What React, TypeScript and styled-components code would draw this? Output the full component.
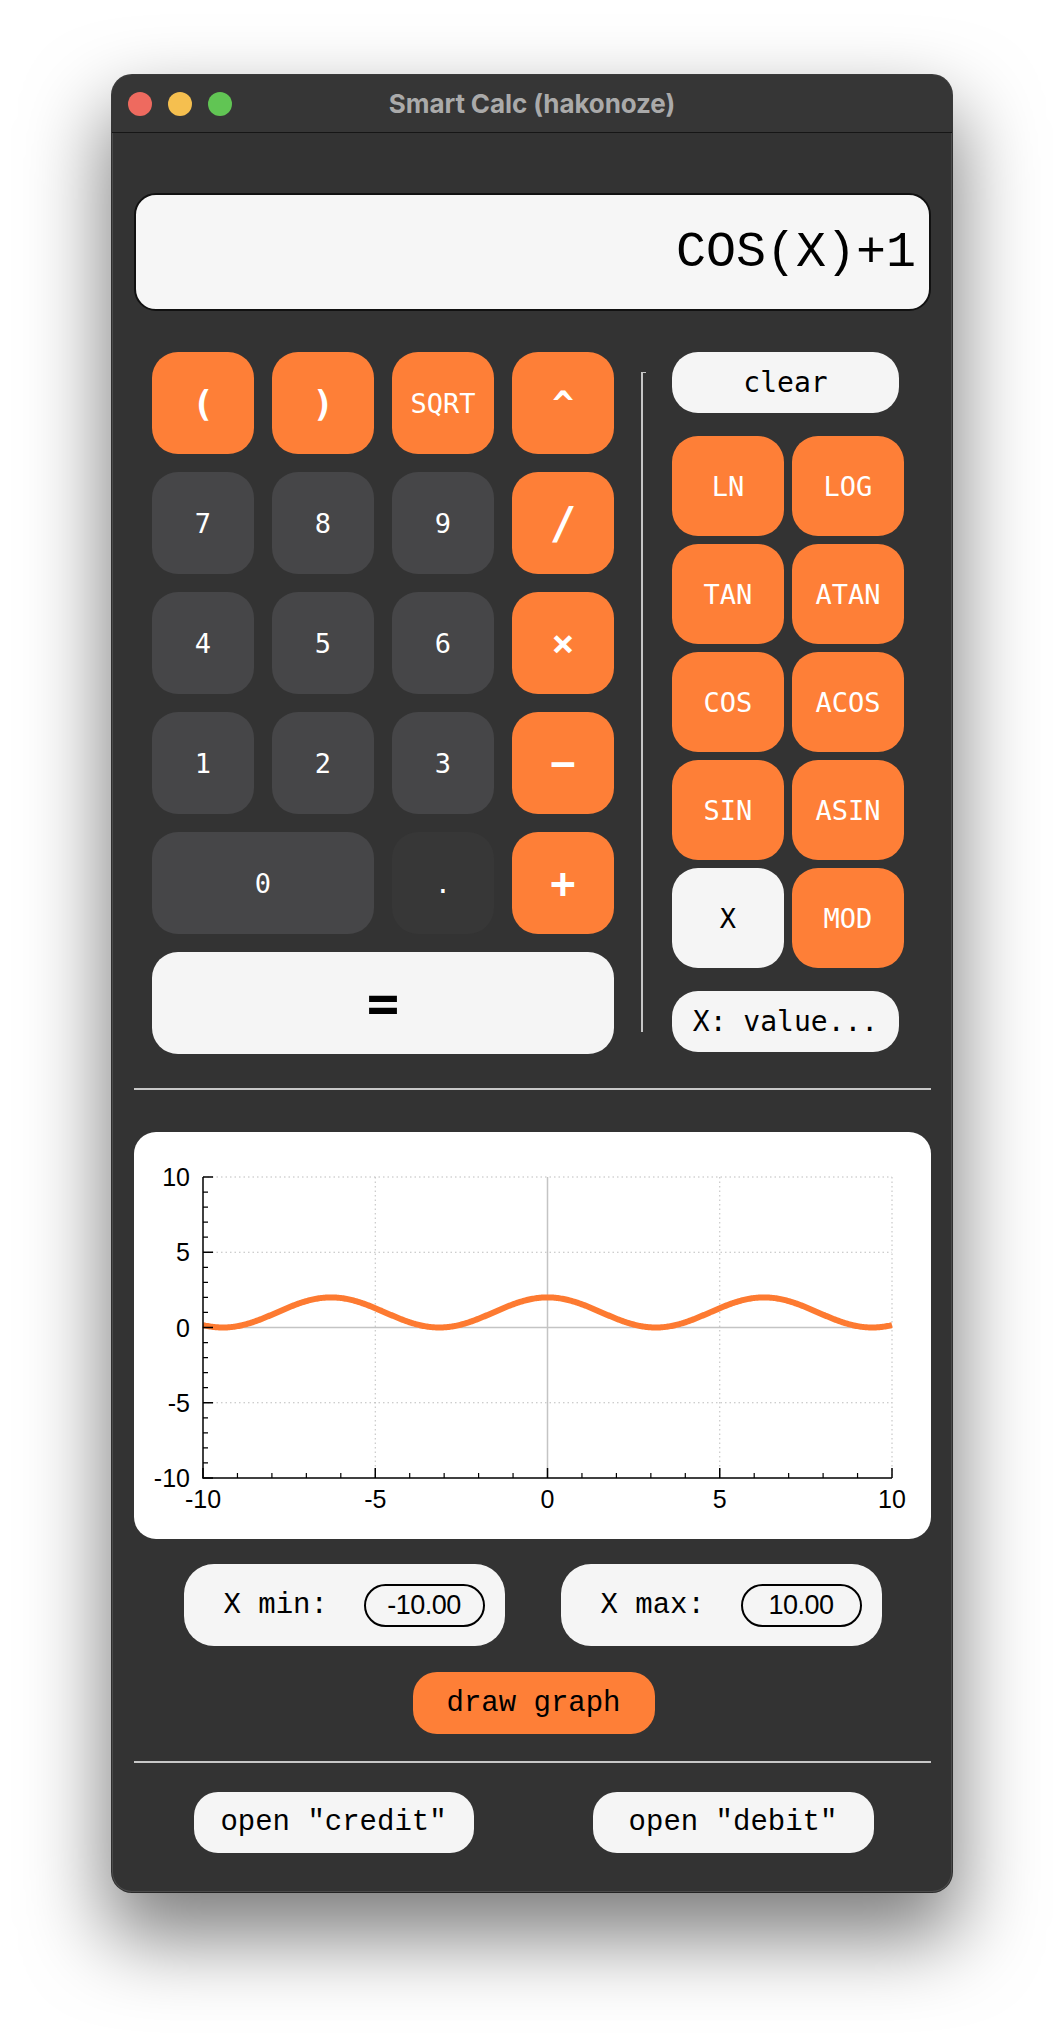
import React from "react";
import styled, { createGlobalStyle, css } from "styled-components";

const GlobalStyle = createGlobalStyle`
  html, body { margin: 0; padding: 0; background: #ffffff; }
  * { box-sizing: border-box; }
`;

const ORANGE = "#fe7f37";
const LIGHT = "#f5f5f5";
const MONO = `"DejaVu Sans Mono", "Liberation Mono", monospace`;
const NARROW_MONO = `"Liberation Mono", "DejaVu Sans Mono", monospace`;

const Page = styled.div`
  width: 1064px;
  height: 2040px;
  padding: 75px 0 0 112px;
  overflow: hidden;
`;

const Window = styled.div`
  width: 840px;
  background: #333333;
  border-radius: 20px;
  overflow: hidden;
  box-shadow: 0 0 0 1px rgba(0, 0, 0, 0.75), inset 0 0 0 1px rgba(255, 255, 255, 0.12),
    0 40px 80px 6px rgba(0, 0, 0, 0.5);
  display: flex;
  flex-direction: column;
`;

const TitleBar = styled.div`
  height: 58px;
  background: #363636;
  border-bottom: 1px solid #161616;
  display: flex;
  align-items: center;
  justify-content: center;
  position: relative;
`;

const Lights = styled.div`
  position: absolute;
  left: 16px;
  top: 17px;
  display: flex;
  gap: 16px;
`;

const Light = styled.span<{ $c: string }>`
  width: 24px;
  height: 24px;
  border-radius: 50%;
  background: ${(p) => p.$c};
`;

const Title = styled.div`
  font-family: Inter, "Liberation Sans", sans-serif;
  font-weight: 700;
  font-size: 26px;
  color: #aaaaaa;
  letter-spacing: -0.1px;
`;

const Body = styled.div`
  padding: 60px 21px 39px 22px;
  display: flex;
  flex-direction: column;
`;

const Display = styled.div`
  height: 118px;
  background: #f6f6f6;
  border: 2px solid #111;
  border-radius: 22px;
  display: flex;
  align-items: center;
  justify-content: flex-end;
  padding-right: 13px;
  font-family: ${NARROW_MONO};
  font-size: 50px;
  color: #000;
`;

const CalcSection = styled.div`
  margin-top: 41px;
  padding-left: 18px;
  display: flex;
  align-items: stretch;
`;

const Keypad = styled.div`
  display: grid;
  grid-template-columns: repeat(4, 102px);
  grid-auto-rows: 102px;
  gap: 18px;
`;

type KeyVariant = "op" | "num" | "dot" | "light";

const variantStyles: Record<KeyVariant, ReturnType<typeof css>> = {
  op: css`
    background: ${ORANGE};
    color: #fff;
  `,
  num: css`
    background: #464648;
    color: #fff;
  `,
  dot: css`
    background: #373737;
    color: #fff;
  `,
  light: css`
    background: ${LIGHT};
    color: #000;
  `,
};

const Key = styled.button<{ $v: KeyVariant; $span?: number; $big?: boolean; $size?: number }>`
  border: none;
  border-radius: 26px;
  display: flex;
  align-items: center;
  justify-content: center;
  font-family: ${MONO};
  font-size: ${(p) => p.$size ?? 27}px;
  font-weight: ${(p) => (p.$big ? 700 : 400)};
  grid-column: span ${(p) => p.$span ?? 1};
  padding: 0;
  ${(p) => variantStyles[p.$v]}
`;

const Divider = styled.div`
  width: 2px;
  margin: 20px 29px 22px 27px;
  background: #c6c6c6;
  position: relative;
  &::before {
    content: "";
    position: absolute;
    top: 0;
    left: 0;
    width: 5px;
    height: 1px;
    background: #c6c6c6;
  }
`;

const SidePanel = styled.div`
  width: 232px;
  display: flex;
  flex-direction: column;
`;

const PillButton = styled.button`
  width: 227px;
  height: 61px;
  border: none;
  border-radius: 26px;
  background: ${LIGHT};
  color: #000;
  font-family: ${MONO};
  font-size: 28px;
  padding: 0;
`;

const FuncGrid = styled.div`
  margin: 23px 0;
  display: grid;
  grid-template-columns: repeat(2, 112px);
  grid-auto-rows: 100px;
  gap: 8px;
`;

const HLine = styled.div<{ $mt: number }>`
  margin-top: ${(p) => p.$mt}px;
  height: 2px;
  background: #c8c8c8;
`;

const GraphPanel = styled.div`
  margin-top: 42px;
  height: 407px;
  background: #ffffff;
  border-radius: 22px;
  overflow: hidden;
`;

const RangeRow = styled.div`
  margin-top: 25px;
  display: flex;
  justify-content: center;
  gap: 56px;
`;

const RangeBox = styled.div`
  width: 321px;
  height: 82px;
  border-radius: 30px;
  background: ${LIGHT};
  display: flex;
  align-items: center;
  justify-content: space-between;
  padding: 0 20px 0 40px;
`;

const RangeLabel = styled.span`
  font-family: ${NARROW_MONO};
  font-size: 29px;
  color: #000;
`;

const RangeInput = styled.input`
  width: 121px;
  height: 43px;
  border: 2px solid #000;
  border-radius: 22px;
  background: transparent;
  text-align: center;
  font-family: "Liberation Sans", Arial, sans-serif;
  font-size: 27px;
  letter-spacing: -0.5px;
  color: #000;
  padding: 0;
  outline: none;
`;

const CenterRow = styled.div<{ $mt: number; $gap?: number }>`
  margin-top: ${(p) => p.$mt}px;
  display: flex;
  justify-content: center;
  gap: ${(p) => p.$gap ?? 0}px;
  padding-left: 2px;
`;

const TextButton = styled.button<{ $w: number; $orange?: boolean }>`
  width: ${(p) => p.$w}px;
  height: ${(p) => (p.$orange ? 62 : 61)}px;
  border: none;
  border-radius: 24px;
  background: ${(p) => (p.$orange ? ORANGE : LIGHT)};
  color: #000;
  font-family: ${NARROW_MONO};
  font-size: 29px;
  padding: 0;
`;

/* ---------- graph ---------- */
const GW = 797;
const GH = 407;
const PL = 69;
const PR = 758;
const PT = 45;
const PB = 346;
const sx = (x: number) => PL + ((x + 10) / 20) * (PR - PL);
const sy = (y: number) => PT + ((10 - y) / 20) * (PB - PT);

function Graph() {
  const pts: string[] = [];
  for (let i = 0; i <= 600; i++) {
    const x = -10 + (20 * i) / 600;
    const y = Math.cos(x) + 1;
    pts.push(`${sx(x).toFixed(2)},${sy(y).toFixed(2)}`);
  }
  const majors = [-10, -5, 0, 5, 10];
  const minors: number[] = [];
  for (let v = -10; v <= 10; v++) if (v % 5 !== 0) minors.push(v);
  const labelFont = { fontFamily: '"Liberation Sans", Arial, sans-serif', fontSize: 25 };
  return (
    <svg width={GW} height={GH} viewBox={`0 0 ${GW} ${GH}`}>
      {[10, 5, -5].map((v) => (
        <line key={"gy" + v} x1={PL} x2={PR} y1={sy(v)} y2={sy(v)} stroke="#bdbdbd" strokeWidth={1} strokeDasharray="1.5 3" />
      ))}
      {[-5, 5, 10].map((v) => (
        <line key={"gx" + v} x1={sx(v)} x2={sx(v)} y1={PT} y2={PB} stroke="#bdbdbd" strokeWidth={1} strokeDasharray="1.5 3" />
      ))}
      <line x1={PL} x2={PR} y1={sy(0)} y2={sy(0)} stroke="#c4c4c4" strokeWidth={1.5} />
      <line x1={sx(0)} x2={sx(0)} y1={PT} y2={PB} stroke="#c4c4c4" strokeWidth={1.5} />
      <polyline points={pts.join(" ")} fill="none" stroke="#fd7a31" strokeWidth={6} strokeLinejoin="round" />
      <line x1={PL} x2={PL} y1={PT} y2={PB + 0.5} stroke="#000" strokeWidth={1.5} />
      <line x1={PL - 0.5} x2={PR} y1={PB} y2={PB} stroke="#000" strokeWidth={1.5} />
      {majors.map((v) => (
        <line key={"my" + v} x1={PL} x2={PL + 10} y1={sy(v)} y2={sy(v)} stroke="#000" strokeWidth={1.5} />
      ))}
      {minors.map((v) => (
        <line key={"ny" + v} x1={PL} x2={PL + 5} y1={sy(v)} y2={sy(v)} stroke="#000" strokeWidth={1.2} />
      ))}
      {majors.map((v) => (
        <line key={"mx" + v} x1={sx(v)} x2={sx(v)} y1={PB} y2={PB - 10} stroke="#000" strokeWidth={1.5} />
      ))}
      {minors.map((v) => (
        <line key={"nx" + v} x1={sx(v)} x2={sx(v)} y1={PB} y2={PB - 5} stroke="#000" strokeWidth={1.2} />
      ))}
      {majors.map((v) => (
        <text key={"ly" + v} x={56} y={sy(v) + 9} textAnchor="end" {...labelFont} fill="#000">
          {v}
        </text>
      ))}
      {majors.map((v) => (
        <text key={"lx" + v} x={sx(v)} y={376} textAnchor="middle" {...labelFont} fill="#000">
          {v}
        </text>
      ))}
    </svg>
  );
}

type KeyDef = { label: string; v: KeyVariant; big?: boolean; span?: number; size?: number };

const keys: KeyDef[] = [
  { label: "(", v: "op", big: true, size: 36 },
  { label: ")", v: "op", big: true, size: 36 },
  { label: "SQRT", v: "op", size: 27 },
  { label: "^", v: "op", big: true, size: 36 },
  { label: "7", v: "num" },
  { label: "8", v: "num" },
  { label: "9", v: "num" },
  { label: "/", v: "op", big: true, size: 44 },
  { label: "4", v: "num" },
  { label: "5", v: "num" },
  { label: "6", v: "num" },
  { label: "×", v: "op", big: true, size: 38 },
  { label: "1", v: "num" },
  { label: "2", v: "num" },
  { label: "3", v: "num" },
  { label: "−", v: "op", big: true, size: 42 },
  { label: "0", v: "num", span: 2 },
  { label: ".", v: "dot" },
  { label: "+", v: "op", big: true, size: 42 },
  { label: "=", v: "light", big: true, span: 4, size: 54 },
];

const funcs: { label: string; v: KeyVariant }[] = [
  { label: "LN", v: "op" },
  { label: "LOG", v: "op" },
  { label: "TAN", v: "op" },
  { label: "ATAN", v: "op" },
  { label: "COS", v: "op" },
  { label: "ACOS", v: "op" },
  { label: "SIN", v: "op" },
  { label: "ASIN", v: "op" },
  { label: "X", v: "light" },
  { label: "MOD", v: "op" },
];

export default function App() {
  return (
    <Page>
      <GlobalStyle />
      <Window>
        <TitleBar>
          <Lights>
            <Light $c="#ee6a5f" />
            <Light $c="#f5bf4f" />
            <Light $c="#61c554" />
          </Lights>
          <Title>Smart Calc (hakonoze)</Title>
        </TitleBar>
        <Body>
          <Display>COS(X)+1</Display>
          <CalcSection>
            <Keypad>
              {keys.map((k) => (
                <Key key={k.label} $v={k.v} $big={k.big} $span={k.span} $size={k.size}>
                  {k.label}
                </Key>
              ))}
            </Keypad>
            <Divider />
            <SidePanel>
              <PillButton>clear</PillButton>
              <FuncGrid>
                {funcs.map((f) => (
                  <Key key={f.label} $v={f.v} $size={27}>
                    {f.label}
                  </Key>
                ))}
              </FuncGrid>
              <PillButton>X: value...</PillButton>
            </SidePanel>
          </CalcSection>
          <HLine $mt={34} />
          <GraphPanel>
            <Graph />
          </GraphPanel>
          <RangeRow>
            <RangeBox>
              <RangeLabel>X min:</RangeLabel>
              <RangeInput readOnly value="-10.00" />
            </RangeBox>
            <RangeBox>
              <RangeLabel>X max:</RangeLabel>
              <RangeInput readOnly value="10.00" />
            </RangeBox>
          </RangeRow>
          <CenterRow $mt={26}>
            <TextButton $w={242} $orange>
              draw graph
            </TextButton>
          </CenterRow>
          <HLine $mt={27} />
          <CenterRow $mt={29} $gap={119}>
            <TextButton $w={280}>open "credit"</TextButton>
            <TextButton $w={281}>open "debit"</TextButton>
          </CenterRow>
        </Body>
      </Window>
    </Page>
  );
}
